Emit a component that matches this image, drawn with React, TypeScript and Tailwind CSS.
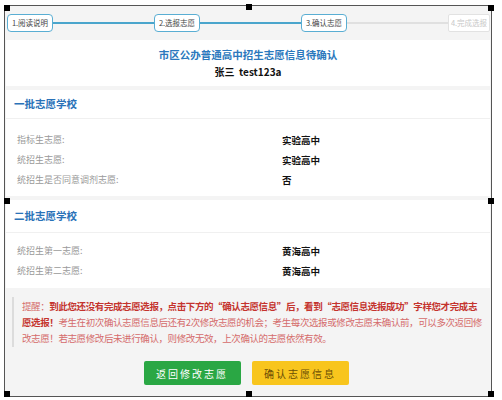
import React from "react";

const font = { fontFamily: '"Noto Sans CJK SC", "Noto Sans", sans-serif' };

function Handle({ className }: { className: string }) {
  return <div className={`absolute w-[6px] h-[6px] bg-black ${className}`} />;
}

function Step({ label, active }: { label: string; active: boolean }) {
  return (
    <div
      className={
        active
          ? "h-[18px] w-[46px] shrink-0 rounded-[4px] border-[1.5px] border-[#5aaed3] bg-white flex items-center justify-center text-[7.5px] text-[#444] leading-none whitespace-nowrap"
          : "h-[18px] w-[42px] shrink-0 rounded-[2px] border border-[#e2e2e2] bg-white flex items-center justify-center text-[7.5px] text-[#c8c8c8] leading-none whitespace-nowrap"
      }
    >
      {label}
    </div>
  );
}

function Row({ label, value }: { label: string; value: string }) {
  return (
    <div className="flex items-center h-[20px]">
      <div className="w-[276px] pl-[11px] text-[9px] text-[#9a9a9a]">{label}</div>
      <div className="text-[9.5px] font-bold text-[#111]">{value}</div>
    </div>
  );
}

export default function App() {
  return (
    <div className="w-[502px] h-[400px] bg-white pt-[5px] pl-[4px]" style={font}>
      <div className="relative w-[488px] h-[392px] border border-[#555] bg-[#f4f4f4] flex flex-col">
        {/* steps */}
        <div className="h-[34px] flex items-center pl-[2px] pr-[1px]">
          <Step label="1.阅读说明" active />
          <div className="flex-1 h-[2.5px] bg-[#4aa5cc]" />
          <Step label="2.选报志愿" active />
          <div className="flex-1 h-[2.5px] bg-[#4aa5cc]" />
          <Step label="3.确认志愿" active />
          <div className="flex-1 h-[2px] bg-[#e0e0e0]" />
          <Step label="4.完成选报" active={false} />
        </div>

        {/* header */}
        <div className="mx-[1px] h-[46px] bg-white flex flex-col items-center justify-center gap-[2px]">
          <div className="text-[10.5px] font-bold text-[#2b78bd] leading-[15px]">
            市区公办普通高中招生志愿信息待确认
          </div>
          <div className="text-[10px] font-bold text-[#111] leading-[15px]">张三&nbsp;&nbsp;test123a</div>
        </div>

        {/* section 1 */}
        <div className="mx-[1px] mt-[4px] h-[106px] bg-white">
          <div className="h-[29px] flex items-center pl-[8px] border-b border-[#f0f0f0]">
            <span className="text-[10.5px] font-bold text-[#2a72b8]">一批志愿学校</span>
          </div>
          <div className="pt-[11px] flex flex-col">
            <Row label="指标生志愿:" value="实验高中" />
            <Row label="统招生志愿:" value="实验高中" />
            <Row label="统招生是否同意调剂志愿:" value="否" />
          </div>
        </div>

        {/* section 2 */}
        <div className="mx-[1px] mt-[4px] h-[88px] bg-white">
          <div className="h-[33px] flex items-center pl-[8px] border-b border-[#f0f0f0]">
            <span className="text-[10.5px] font-bold text-[#2a72b8]">二批志愿学校</span>
          </div>
          <div className="pt-[8px] flex flex-col">
            <Row label="统招生第一志愿:" value="黄海高中" />
            <Row label="统招生第二志愿:" value="黄海高中" />
          </div>
        </div>

        {/* notice */}
        <div className="mt-[9px] ml-[7px] mr-[8px] border-l-[2px] border-[#dcdcdc] pl-[8px] py-[1px] text-[9.5px] leading-[16px] tracking-[-0.4px] text-[#d56b6b]">
          提醒：
          <span className="font-bold text-[#c4332d]">
            到此您还没有完成志愿选报，点击下方的“确认志愿信息”后，看到“志愿信息选报成功”字样您才完成志愿选报！
          </span>
          考生在初次确认志愿信息后还有2次修改志愿的机会；考生每次选报或修改志愿未确认前，可以多次返回修改志愿！若志愿修改后未进行确认，则修改无效，上次确认的志愿依然有效。
        </div>

        {/* buttons */}
        <div className="mt-[14px] flex justify-center gap-[11px] pr-[4px]">
          <button className="w-[97px] h-[24px] rounded-[2px] bg-[#2aa744] text-white text-[10px] tracking-[2px]">
            返回修改志愿
          </button>
          <button className="w-[97px] h-[24px] rounded-[2px] bg-[#f8c51d] text-[#6b4e05] text-[10px] tracking-[2px]">
            确认志愿信息
          </button>
        </div>

        <Handle className="left-[-1px] top-[-1px]" />
        <Handle className="left-[241px] top-[-2px]" />
        <Handle className="right-[-3px] top-[-1px]" />
        <Handle className="left-[-1px] top-[192px]" />
        <Handle className="right-[-3px] top-[192px]" />
        <Handle className="left-[-1px] bottom-[-1px]" />
        <Handle className="left-[241px] bottom-[-1px]" />
        <Handle className="right-[-3px] bottom-[-1px]" />
      </div>
    </div>
  );
}
